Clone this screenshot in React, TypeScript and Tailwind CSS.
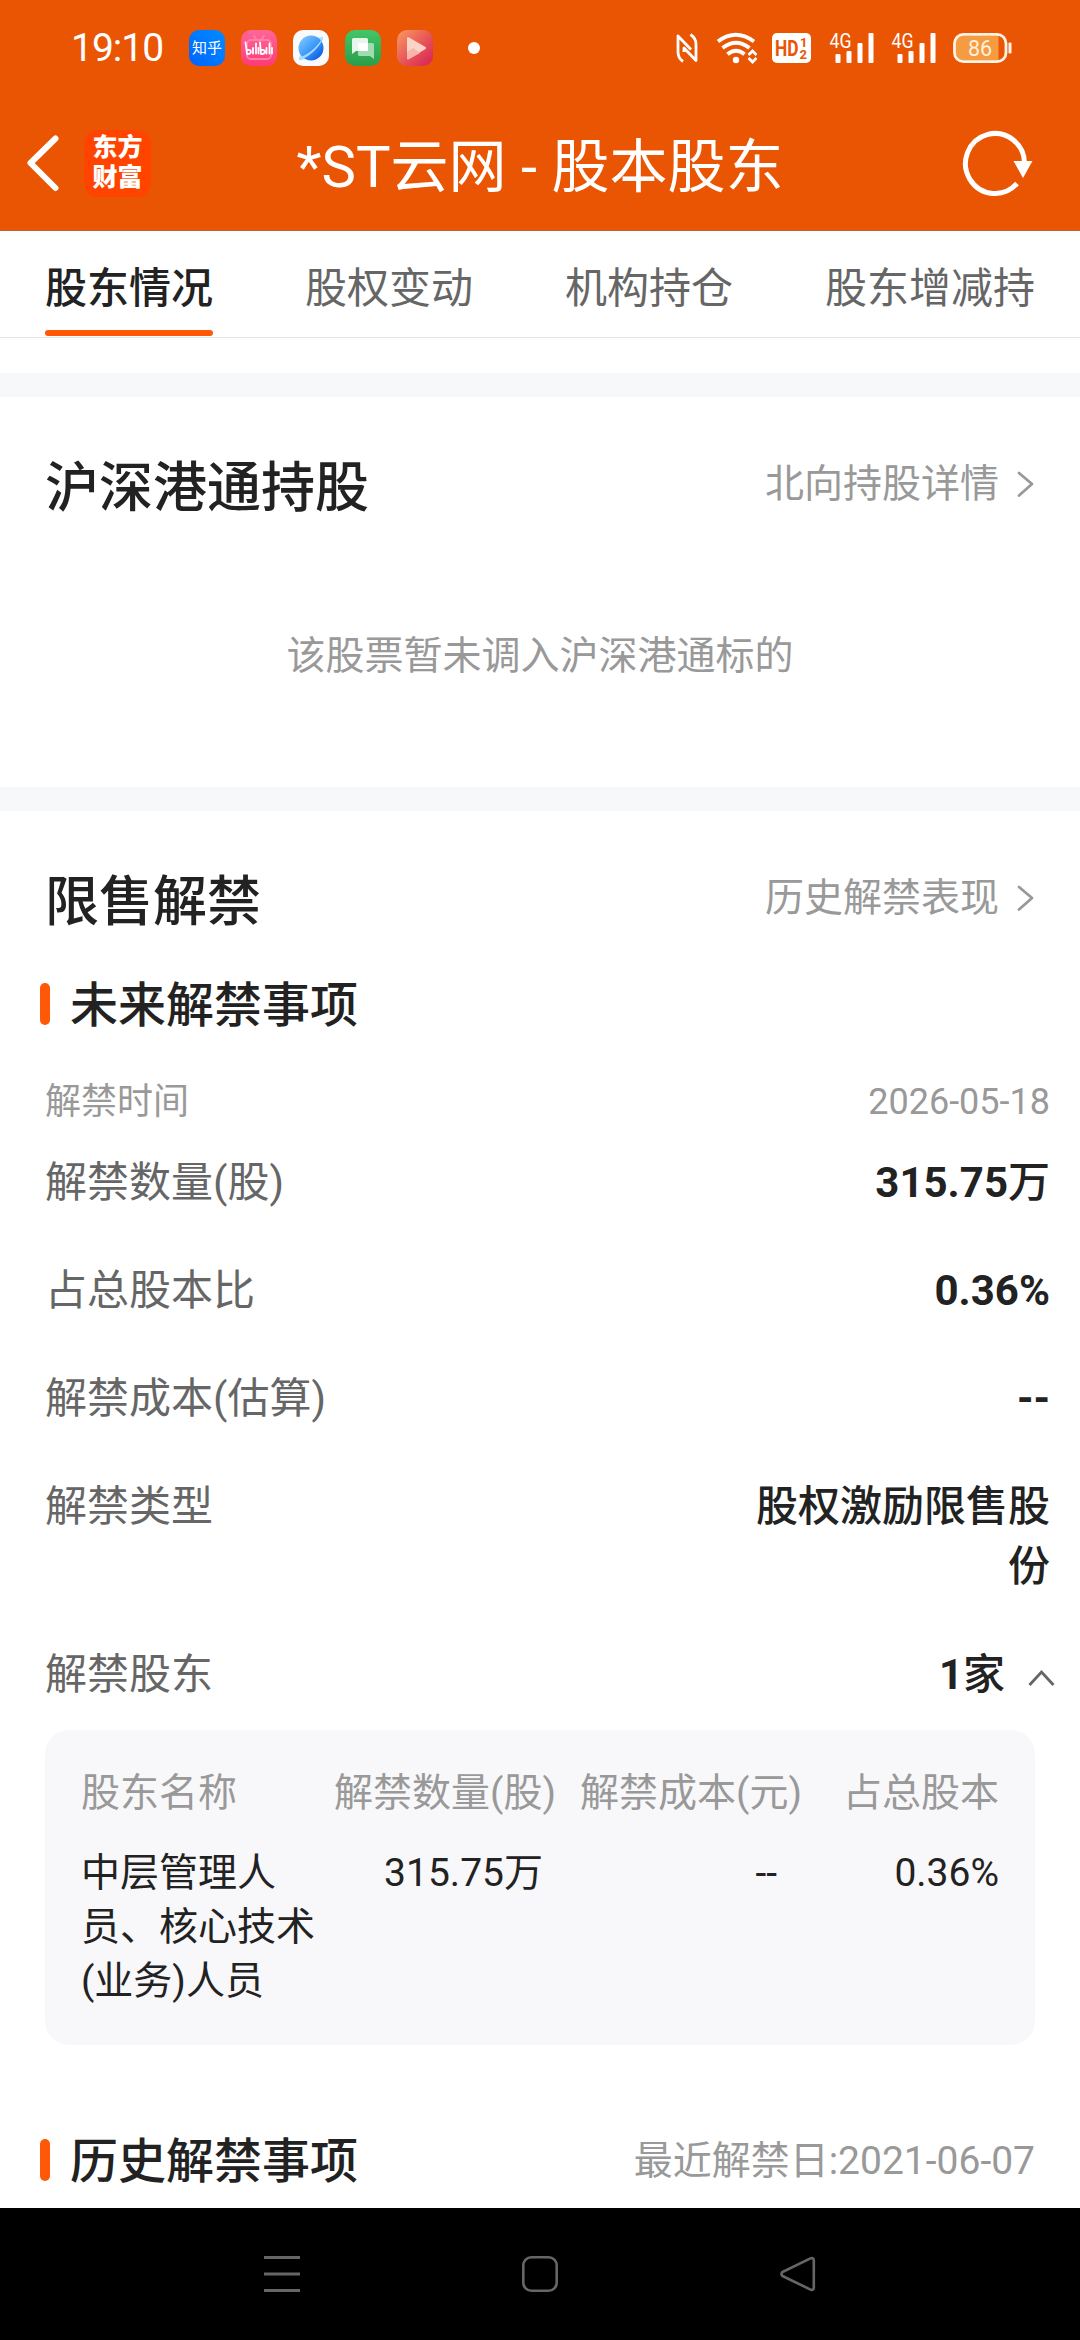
import type { ReactNode } from 'react';

const tabs = ['股东情况', '股权变动', '机构持仓', '股东增减持'];

function SignalIcon() {
  return (
    <svg className="h-[32px] w-[46px] overflow-visible" viewBox="0 0 46 32" fill="#fff">
      <text x="0.5" y="16" fontSize="20" fontFamily="Roboto" textLength="22" lengthAdjust="spacingAndGlyphs">
        4G
      </text>
      <rect x="6.5" y="22" width="5" height="9" rx="1" />
      <rect x="17.5" y="19" width="5" height="12" rx="1" />
      <rect x="28.5" y="11" width="5" height="20" rx="1" />
      <rect x="39.5" y="1" width="5" height="30" rx="1" />
    </svg>
  );
}

function AppIcons() {
  return (
    <div className="flex gap-[16px]">
      <div className="flex size-[36px] items-center justify-center rounded-[10px] bg-linear-to-bl from-[#008cff] to-[#0062ff] text-[15px] leading-none text-white">
        知乎
      </div>
      <svg className="size-[36px]" viewBox="0 0 36 36">
        <defs>
          <linearGradient id="bili" x2="0" y2="1">
            <stop stopColor="#ff6699" />
            <stop offset="1" stopColor="#ff3a78" />
          </linearGradient>
        </defs>
        <rect width="36" height="36" rx="10" fill="url(#bili)" />
        <g fill="none" stroke="#ff82a8" strokeWidth="1.800" strokeLinecap="round">
          <rect x="6" y="10" width="24" height="19" rx="4" />
          <path d="m13 6 3 4M23 6l-3 4" />
        </g>
        <g fill="none" stroke="#fff" strokeWidth="1.800" strokeLinecap="round" strokeLinejoin="round">
          <path d="m4.500 12.500 1.500 11.500c4.500.5 5.500-5 .5-4M12 18v5.500M15 13.500v10M17.500 18v5.500M19 12.500l1 11.500c4.500.5 5.500-5 .5-4M25.500 18v5.500M28.500 13.500v10M31 18v5.500" />
        </g>
      </svg>
      <svg className="size-[36px]" viewBox="0 0 36 36">
        <defs>
          <linearGradient id="planet" x2="1" y2="1">
            <stop stopColor="#8ed0ff" />
            <stop offset=".5" stopColor="#3d9bfb" />
            <stop offset="1" stopColor="#0046d8" />
          </linearGradient>
        </defs>
        <rect width="36" height="36" rx="10" fill="#f8fafc" />
        <path d="M6 30C4 24 25 5 30 7c2 5-17 25-24 23Z" fill="#b8e0fd" />
        <circle cx="18" cy="18" r="12.500" fill="url(#planet)" />
        <path d="M6 30C16 28 29 15 30 7 26 15 16 24 8 27Z" fill="#a5d9ff" />
      </svg>
      <svg className="size-[36px]" viewBox="0 0 36 36">
        <defs>
          <linearGradient id="chat" x2="0" y2="1">
            <stop stopColor="#42c767" />
            <stop offset="1" stopColor="#2a9d4b" />
          </linearGradient>
        </defs>
        <rect width="36" height="36" rx="10" fill="url(#chat)" />
        <path d="M14 13h13.500q1.500 0 1.500 1.500V29l-4-3H14.500q-1.500 0-1.500-1.500V14Z" fill="#a0dcaf" />
        <path d="M8.500 8h13q1.500 0 1.500 1.500V21H11l-4 3V9.500Q7 8 8.500 8Z" fill="#e6f6ea" />
        <path d="M13 13h10v8H13Z" fill="#fff" />
      </svg>
      <svg className="size-[36px]" viewBox="0 0 36 36">
        <defs>
          <linearGradient id="player" x2="1" y2="1">
            <stop stopColor="#f99a60" />
            <stop offset=".55" stopColor="#e75358" />
            <stop offset="1" stopColor="#d81f58" />
          </linearGradient>
        </defs>
        <rect width="36" height="36" rx="10" fill="url(#player)" />
        <path d="M10 8.500q0-2 2-1L28.500 17q1 1 0 2L12 29q-2 .8-2-1Z" fill="#fbd3c8" />
        <path d="m10 22 6-4 7 5-11 6q-2 .8-2-1Z" fill="#f8b5aa" />
      </svg>
    </div>
  );
}

function StatusBar() {
  return (
    <div className="flex h-[96px] items-center pr-[68px] pl-[71px] text-white">
      <span className="w-[118px] font-[Roboto] text-[39px] leading-none tracking-[-1px]">19:10</span>
      <AppIcons />
      <span className="ml-[35px] size-[12px] rounded-full bg-white" />
      <div className="ml-auto flex items-center">
        <svg className="mr-[18px] h-[30px] w-[24px]" viewBox="0 0 24 30" fill="none" stroke="#fff" strokeWidth="2.800" strokeLinejoin="round">
          <path d="M8 28.500C4.500 26 3 23.500 3 19V3l13 13.500M15.500 1.500C19 4 21 6.500 21 11v16.500L9 15v4" />
        </svg>
        <svg className="mr-[15px] h-[32px] w-[40px]" viewBox="0 0 40 32" fill="none" stroke="#fff" strokeWidth="3.900">
          <path d="M1 9.500q17.500-13.500 36 0M5.500 16q13.500-10.500 27 0M10.500 22.300q8.500-7 17 0" />
          <circle cx="19" cy="28" r="3.200" fill="#fff" stroke="none" />
          <path d="m31.500 23 4-4 4 4M31.500 26l4 4 4-4" strokeWidth="2.800" />
        </svg>
        <svg className="mr-[18px] h-[32px] w-[39px]" viewBox="0 0 39 32">
          <rect y="1" width="39" height="30" rx="5" fill="#fff" />
          <g fill="#ea5504" fontFamily="Roboto" fontWeight="700">
            <text x="3" y="24" fontSize="22.500" textLength="23.500" lengthAdjust="spacingAndGlyphs">HD</text>
            <text x="28" y="14.500" fontSize="13">1</text>
            <text x="27.500" y="26.500" fontSize="13">2</text>
          </g>
        </svg>
        <SignalIcon />
        <span className="w-[16px]" />
        <SignalIcon />
        <svg className="ml-[16px] h-[32px] w-[59px]" viewBox="0 0 59 32">
          <path d="M10 3.500h35.500v25H10q-7 0-7-7v-11q0-7 7-7Z" fill="#f59b42" />
          <rect x="1.500" y="2.300" width="51.500" height="27.400" rx="9" fill="none" stroke="#fff4e6" strokeWidth="2.800" />
          <rect x="55.500" y="10.500" width="3" height="11" rx="1" fill="#fff4e6" />
          <text x="15" y="23.500" fontSize="21.500" fontFamily="Roboto" fill="#fff2dc" textLength="24">86</text>
        </svg>
      </div>
    </div>
  );
}

function Header() {
  return (
    <header className="h-[231px] shrink-0 border-b border-[#b0683c] bg-[#ea5504]">
      <StatusBar />
      <div className="grid h-[134px] grid-cols-[270px_1fr_270px] items-center text-white">
        <div className="flex items-center pl-[26px]">
          <svg className="h-[58px] w-[34px]" viewBox="0 0 34 58" fill="none" stroke="#fff" strokeWidth="6" strokeLinecap="round" strokeLinejoin="round">
            <path d="M29.500 4.500 4.500 29l25 25" />
          </svg>
          <div className="ml-[24px] flex size-[67px] items-center justify-center rounded-[14px] bg-[#ff4400] text-[25px] leading-[30px] font-black">
            <span className="w-[50px]">东方财富</span>
          </div>
        </div>
        <h1 className="pt-[7px] text-center text-[58px] leading-[70px] whitespace-nowrap">*ST云网 - 股本股东</h1>
        <svg className="mt-[1px] mr-[44px] ml-auto h-[68px] w-[74px]" viewBox="0 0 74 68" fill="none" stroke="#fff" strokeWidth="5">
          <path d="M62.500 34A29.500 30 0 1 0 55 53.500" />
          <path d="M51.500 31h19L61 48Z" fill="#fff" stroke="none" />
        </svg>
      </div>
    </header>
  );
}

function Divider() {
  return <div className="h-[24px] shrink-0 bg-[#f7f8fa]" />;
}

function SectionHead({ title, link }: { title: string; link: string }) {
  return (
    <div className="flex items-center justify-between px-[45px]">
      <h2 className="pt-[2px] text-[54px] leading-[70px] font-medium">{title}</h2>
      <div className="flex items-center pb-[8px] text-[39px] leading-[54px] text-[#999]">
        {link}
        <svg className="mr-[1px] mb-[1px] ml-[17px] h-[28px] w-[18px]" viewBox="0 0 18 28" fill="none" stroke="#999" strokeWidth="2.800" strokeLinecap="round">
          <path d="m3 3 13 11L3 25.500" strokeLinejoin="round" />
        </svg>
      </div>
    </div>
  );
}

function SubHead({ title, note }: { title: string; note?: string }) {
  return (
    <div className="flex h-[60px] items-center pr-[45px] pl-[40px]">
      <span className="h-[42px] w-[10px] rounded-full bg-[#ff5806]" />
      <h3 className="ml-[20px] pt-[3px] text-[48px] leading-[57px] font-medium">{title}</h3>
      {note && <span className="ml-auto pt-[2px] text-[39px] leading-[54px] text-[#999]">{note}</span>}
    </div>
  );
}

function Row({ label, children }: { label: string; children: ReactNode }) {
  return (
    <div className="flex justify-between py-[24px] pr-[30px] pl-[45px] text-[42px] leading-[60px]">
      <span className="text-[#666]">{label}</span>
      <div className="max-w-[306px] text-right font-medium">{children}</div>
    </div>
  );
}

function NavigationBar() {
  return (
    <nav className="flex h-[132px] shrink-0 items-center justify-between bg-black px-[264px]">
      <svg className="size-[36px]" viewBox="0 0 36 36" stroke="#666" strokeWidth="3">
        <path d="M0 1.500h36M0 18h36M0 34.500h36" />
      </svg>
      <svg className="size-[36px]" viewBox="0 0 36 36" fill="none" stroke="#666" strokeWidth="2.600">
        <rect x="1.300" y="1.300" width="33.400" height="33.400" rx="8" />
      </svg>
      <svg className="size-[36px]" viewBox="0 0 36 36" fill="none" stroke="#666" strokeWidth="2.600" strokeLinejoin="round">
        <path d="M31 2.200 2.500 16q-2 2 0 4L31 33.800q2.800.5 2.800-2V4.200q0-2.500-2.800-2Z" />
      </svg>
    </nav>
  );
}

export default function App() {
  return (
    <div className="flex h-[2340px] w-[1080px] flex-col overflow-hidden bg-white font-[Roboto,'Noto_Sans_CJK_SC',sans-serif] text-[#222]">
      <Header />

      <div className="flex h-[107px] shrink-0 items-end justify-between border-b border-[#e5e5e5] px-[45px]">
        {tabs.map((tab, i) => (
          <div
            key={tab}
            className={
              i === 0
                ? 'flex h-[106px] flex-col items-center text-[42px] leading-[60px] font-medium'
                : 'flex h-[106px] flex-col items-center text-[42px] leading-[60px] text-[#666]'
            }
          >
            <span className="mt-[28px]">{tab}</span>
            {i === 0 && <span className="mt-[11px] h-[6px] w-full rounded-full bg-[#ff5806]" />}
          </div>
        ))}
      </div>

      <div className="h-[35px] shrink-0" />
      <Divider />
      <section className="h-[390px] shrink-0 pt-[55px]">
        <SectionHead title="沪深港通持股" link="北向持股详情" />
        <p className="mt-[105px] text-center text-[39px] leading-[54px] text-[#999]">该股票暂未调入沪深港通标的</p>
      </section>
      <Divider />

      <section className="h-[1397px] shrink-0 overflow-hidden pt-[55px]">
        <SectionHead title="限售解禁" link="历史解禁表现" />
        <div className="h-[36px]" />
        <SubHead title="未来解禁事项" />
        <div className="mt-[41px] flex justify-between pr-[30px] pl-[45px] text-[36px] leading-[54px] text-[#999]">
          <span>解禁时间</span>
          <span>2026-05-18</span>
        </div>
        <Row label="解禁数量(股)">
          <b>315.75</b>万
        </Row>
        <Row label="占总股本比">
          <b>0.36%</b>
        </Row>
        <Row label="解禁成本(估算)">
          <b>--</b>
        </Row>
        <Row label="解禁类型">股权激励限售股份</Row>
        <Row label="解禁股东">
          <div className="-mr-[5px] flex items-center">
            <b>1</b>家
            <svg className="mt-[5px] ml-[23px] h-[18px] w-[27px]" viewBox="0 0 27 18" fill="none" stroke="#666" strokeWidth="2.800">
              <path d="M1.500 16 13.500 3l12 13" />
            </svg>
          </div>
        </Row>

        <div className="mx-[45px] mt-[1px] h-[315px] rounded-[24px] bg-[#f8f8fa] px-[36px] pt-[36px] text-[39px] leading-[54px]">
          <div className="grid grid-cols-[234px_241px_246px_197px] text-right whitespace-nowrap text-[#999]">
            <span className="text-left">股东名称</span>
            <span className="justify-self-end">解禁数量(股)</span>
            <span className="justify-self-end">解禁成本(元)</span>
            <span>占总股本</span>
          </div>
          <div className="mt-[26px] grid grid-cols-[234px_241px_246px_197px] text-right">
            <span className="text-left">中层管理人员、核心技术(业务)人员</span>
            <span className="pr-[13px]">315.75万</span>
            <span className="pr-[25px]">--</span>
            <span>0.36%</span>
          </div>
        </div>

        <div className="h-[85px]" />
        <SubHead title="历史解禁事项" note="最近解禁日:2021-06-07" />
      </section>

      <NavigationBar />
    </div>
  );
}
